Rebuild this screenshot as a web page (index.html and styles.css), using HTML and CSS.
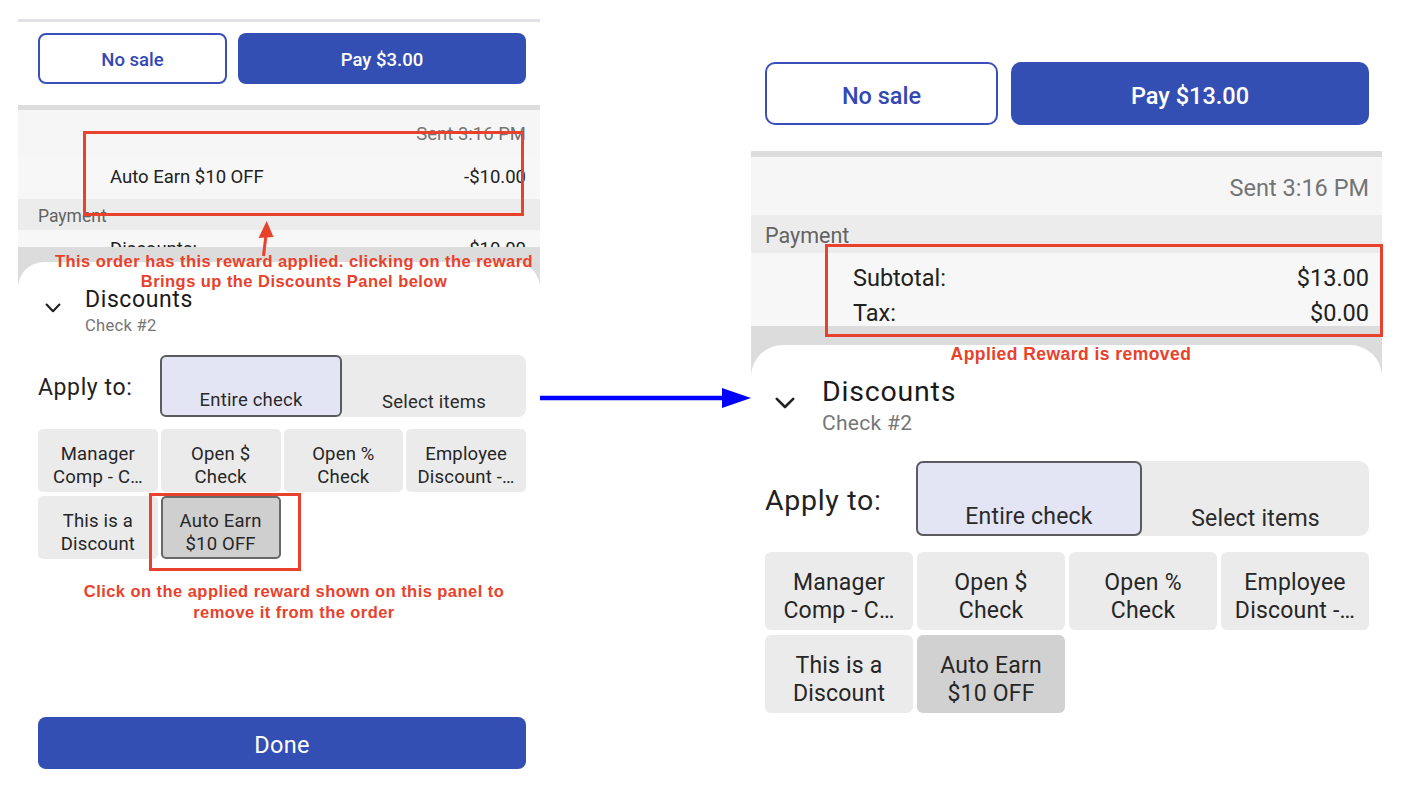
FILE: index.html
```html
<!DOCTYPE html>
<html lang="en">
<head>
<meta charset="utf-8">
<title>Discounts – reward removal</title>
<link rel="stylesheet" href="styles.css">
</head>
<body>
<div class="canvas">

  <section class="phone phone-a">
    <div class="topline"></div>
    <div class="actions">
      <button class="btn btn-outline">No sale</button>
      <button class="btn btn-fill">Pay $3.00</button>
    </div>
    <div class="order">
      <div class="sent">Sent 3:16 PM</div>
      <div class="line-item"><span>Auto Earn $10 OFF</span><span>-$10.00</span></div>
      <div class="pay-head">Payment</div>
      <div class="totals">
        <div class="total-row"><span>Discounts:</span><span>$10.00</span></div>
      </div>
    </div>
    <div class="scrim">
      <div class="sheet">
        <div class="sheet-head">
          <svg class="chev" viewBox="0 0 16 11" aria-hidden="true"><polyline points="1.6,1.6 8,8.2 14.4,1.6"/></svg>
          <div class="titles">
            <div class="title">Discounts</div>
            <div class="sub">Check #2</div>
          </div>
        </div>
        <div class="apply">
          <div class="apply-label">Apply to:</div>
          <div class="seg">
            <div class="seg-item on">Entire check</div>
            <div class="seg-item">Select items</div>
          </div>
        </div>
        <div class="tiles">
          <div class="tile"><span>Manager</span><span>Comp - C…</span></div>
          <div class="tile"><span>Open $</span><span>Check</span></div>
          <div class="tile"><span>Open %</span><span>Check</span></div>
          <div class="tile"><span>Employee</span><span>Discount -…</span></div>
          <div class="tile"><span>This is a</span><span>Discount</span></div>
          <div class="tile tile-sel"><span>Auto Earn</span><span>$10 OFF</span></div>
        </div>
        <button class="btn btn-fill done">Done</button>
      </div>
    </div>
  </section>

  <div class="flow-arrow">
    <svg viewBox="0 0 211 24" aria-hidden="true">
      <line x1="0" y1="12" x2="186" y2="12"/>
      <polygon points="182,2 211,12 182,22"/>
    </svg>
  </div>

  <section class="phone phone-b">
    <div class="actions">
      <button class="btn btn-outline">No sale</button>
      <button class="btn btn-fill">Pay $13.00</button>
    </div>
    <div class="order">
      <div class="sent">Sent 3:16 PM</div>
      <div class="pay-head">Payment</div>
      <div class="totals">
        <div class="total-row"><span>Subtotal:</span><span>$13.00</span></div>
        <div class="total-row"><span>Tax:</span><span>$0.00</span></div>
      </div>
    </div>
    <div class="scrim">
      <div class="sheet">
        <div class="sheet-head">
          <svg class="chev" viewBox="0 0 20 13" aria-hidden="true"><polyline points="1.8,1.8 10,10 18.2,1.8"/></svg>
          <div class="titles">
            <div class="title">Discounts</div>
            <div class="sub">Check #2</div>
          </div>
        </div>
        <div class="apply">
          <div class="apply-label">Apply to:</div>
          <div class="seg">
            <div class="seg-item on">Entire check</div>
            <div class="seg-item">Select items</div>
          </div>
        </div>
        <div class="tiles">
          <div class="tile"><span>Manager</span><span>Comp - C…</span></div>
          <div class="tile"><span>Open $</span><span>Check</span></div>
          <div class="tile"><span>Open %</span><span>Check</span></div>
          <div class="tile"><span>Employee</span><span>Discount -…</span></div>
          <div class="tile"><span>This is a</span><span>Discount</span></div>
          <div class="tile tile-on"><span>Auto Earn</span><span>$10 OFF</span></div>
        </div>
      </div>
    </div>
  </section>

  <!-- annotations drawn over the screenshots -->
  <div class="mark box-a1"></div>
  <svg class="red-arrow" viewBox="0 0 20 36" aria-hidden="true">
    <line x1="7.5" y1="35" x2="10" y2="14"/>
    <polygon points="10.7,0 2.5,17 17.5,16"/>
  </svg>
  <p class="note note-a1">This order has this reward applied. clicking on the reward<br>Brings up the Discounts Panel below</p>
  <div class="mark box-a2"></div>
  <p class="note note-a2">Click on the applied reward shown on this panel to<br>remove it from the order</p>
  <div class="mark box-b1"></div>
  <p class="note note-b1">Applied Reward is removed</p>
</div>
</body>
</html>
```

FILE: styles.css
```css
* { box-sizing: border-box; }

html, body {
  margin: 0;
  padding: 0;
  background: #ffffff;
}

body {
  font-family: Roboto, "Noto Sans", "Liberation Sans", sans-serif;
  color: #212121;
}

.canvas {
  position: relative;
  width: 1402px;
  height: 796px;
  overflow: hidden;
  display: flex;
  align-items: flex-start;
}

.phone {
  display: flex;
  flex-direction: column;
  height: 796px;
  overflow: hidden;
}

.btn {
  font-family: Roboto, "Noto Sans", sans-serif;
  font-weight: 500;
  border-radius: 8px;
  cursor: pointer;
}

.btn-outline {
  background: #ffffff;
  color: #3448b4;
  border: 2px solid #3a4fbb;
}

.btn-fill {
  background: #344fb3;
  color: #ffffff;
  border: none;
}

.actions { display: flex; }

.actions .btn-fill { flex: 1; }

.order {
  background: #f6f6f6;
  border-top-style: solid;
  border-top-color: #dcdcdc;
}

.sent {
  text-align: right;
  color: #747474;
}

.line-item,
.total-row {
  display: flex;
  justify-content: space-between;
}

.pay-head {
  background: #ececec;
  color: #636363;
}

.totals { overflow: hidden; }

.scrim {
  flex: 1;
  background: #dcdcdc;
  display: flex;
  flex-direction: column;
}

.sheet {
  flex: 1;
  background: #ffffff;
  display: flex;
  flex-direction: column;
}

.sheet-head { display: flex; align-items: flex-start; }

.chev { flex: none; }
.chev polyline {
  fill: none;
  stroke: #222222;
  stroke-linecap: round;
  stroke-linejoin: round;
}

.title { font-weight: 400; color: #1a1a1a; }

.sub { color: #767676; }

.apply { display: flex; align-items: center; }

.apply-label { flex: none; color: #222222; }

.seg {
  flex: 1;
  display: flex;
  height: 100%;
  background: #ebebeb;
}

.seg-item {
  flex: 1;
  display: flex;
  align-items: flex-end;
  justify-content: center;
  color: #2a2a2a;
}

.seg-item.on {
  flex: none;
  background: #e3e5f4;
  border: 2px solid #5a5a5f;
}

.tiles { display: grid; grid-template-columns: repeat(4, 1fr); }

.tile {
  background: #ebebeb;
  display: flex;
  flex-direction: column;
  align-items: center;
  justify-content: center;
  text-align: center;
  color: #262626;
  white-space: nowrap;
}

.tile-sel {
  background: #cfcfcf;
  border: 2px solid #686868;
}

.tile-on { background: #d1d1d1; }

/* ---------- left screenshot ---------- */
.phone-a {
  width: 522px;
  margin-left: 18px;
}
.phone-a .topline {
  flex: none;
  height: 3px;
  margin-top: 19px;
  background: #e4e1e6;
}
.phone-a .actions {
  padding: 11px 14px 0 20px;
  gap: 11px;
}
.phone-a .btn { height: 51px; font-size: 18.5px; padding: 3px 0 0; }
.phone-a .btn-outline { width: 189px; }
.phone-a .order {
  margin-top: 21px;
  border-top-width: 5px;
}
.phone-a .sent {
  height: 45px;
  padding: 12px 14px 0 0;
  font-size: 18.5px;
  line-height: 24px;
}
.phone-a .line-item {
  height: 44px;
  padding: 10px 14px 0 92px;
  font-size: 18.5px;
  line-height: 24px;
  background: #f7f7f7;
}
.phone-a .pay-head {
  height: 31px;
  line-height: 30px;
  padding: 2px 0 0 20px;
  font-size: 17.5px;
}
.phone-a .totals {
  height: 17px;
  background: #f7f7f7;
}
.phone-a .total-row {
  padding: 8px 14px 0 92px;
  font-size: 18.5px;
  line-height: 22px;
}
.phone-a .scrim { padding-top: 15px; }
.phone-a .sheet {
  border-radius: 26px 26px 0 0;
  padding: 25px 14px 0 20px;
}
.phone-a .chev {
  width: 16px;
  height: 11px;
  margin: 16px 24px 0 7px;
}
.phone-a .chev polyline { stroke-width: 2.2; }
.phone-a .title {
  font-size: 23px;
  line-height: 26px;
  letter-spacing: 0.6px;
}
.phone-a .sub {
  margin-top: 3px;
  font-size: 16.5px;
  line-height: 20px;
  letter-spacing: 0.3px;
}
.phone-a .apply {
  margin-top: 19px;
  height: 62px;
}
.phone-a .apply-label {
  width: 122px;
  padding-top: 2px;
  font-size: 23px;
  letter-spacing: 0.6px;
}
.phone-a .seg { border-radius: 8px; }
.phone-a .seg-item {
  padding-bottom: 4px;
  font-size: 18.5px;
  line-height: 22px;
  letter-spacing: 0.2px;
}
.phone-a .seg-item.on {
  width: 182px;
  border-radius: 6px;
}
.phone-a .tiles {
  margin-top: 12px;
  grid-auto-rows: 63px;
  gap: 4px 3px;
}
.phone-a .tile {
  padding-top: 10px;
  border-radius: 5px;
  font-size: 18.5px;
  line-height: 23px;
  letter-spacing: 0.2px;
}
.phone-a .done {
  flex: none;
  margin-top: 158px;
  height: 52px;
  padding: 3px 0 0;
  font-size: 23.5px;
  font-weight: 400;
  letter-spacing: 0.3px;
}

/* ---------- arrow between screenshots ---------- */
.flow-arrow {
  flex: none;
  width: 211px;
  height: 24px;
  margin-top: 386px;
}
.flow-arrow svg { display: block; width: 211px; height: 24px; }
.flow-arrow line { stroke: #0000ff; stroke-width: 4.5; }
.flow-arrow polygon { fill: #0000ff; }

/* ---------- right screenshot ---------- */
.phone-b { width: 631px; }
.phone-b .actions {
  padding: 62px 13px 0 14px;
  gap: 13px;
}
.phone-b .btn { height: 63px; border-radius: 10px; font-size: 23.5px; padding: 4px 0 0; }
.phone-b .btn-outline { width: 233px; }
.phone-b .order {
  margin-top: 26px;
  border-top-width: 6px;
}
.phone-b .sent {
  height: 58px;
  padding: 17px 13px 0 0;
  font-size: 23.5px;
  line-height: 28px;
}
.phone-b .pay-head {
  height: 38px;
  line-height: 36px;
  padding: 3px 0 0 14px;
  font-size: 21.5px;
}
.phone-b .totals {
  height: 73px;
  padding-top: 8px;
  background: #f7f7f7;
}
.phone-b .total-row {
  padding: 0 13px 0 102px;
  font-size: 23.5px;
  line-height: 35px;
}
.phone-b .scrim { padding-top: 19px; }
.phone-b .sheet {
  border-radius: 32px 32px 0 0;
  padding: 31px 13px 0 14px;
}
.phone-b .chev {
  width: 20px;
  height: 13px;
  margin: 21px 27px 0 10px;
}
.phone-b .chev polyline { stroke-width: 2.6; }
.phone-b .title {
  font-size: 28.5px;
  line-height: 32px;
  letter-spacing: 0.8px;
}
.phone-b .sub {
  margin-top: 2px;
  font-size: 21px;
  line-height: 26px;
  letter-spacing: 0.3px;
}
.phone-b .apply {
  margin-top: 25px;
  height: 75px;
}
.phone-b .apply-label {
  width: 151px;
  padding-top: 3px;
  font-size: 28.5px;
  letter-spacing: 0.7px;
}
.phone-b .seg { border-radius: 10px; }
.phone-b .seg-item {
  padding-bottom: 4px;
  font-size: 23px;
  line-height: 26px;
  letter-spacing: 0.2px;
}
.phone-b .seg-item.on {
  width: 226px;
  border-radius: 7px;
}
.phone-b .tiles {
  margin-top: 16px;
  grid-auto-rows: 78px;
  gap: 5px 4px;
}
.phone-b .tile {
  padding-top: 12px;
  border-radius: 6px;
  font-size: 23px;
  line-height: 28px;
  letter-spacing: 0.2px;
}

/* ---------- red annotations ---------- */
.mark {
  position: absolute;
  border: 3px solid #e8412c;
}
.box-a1 { left: 83px; top: 131px; width: 441px; height: 85px; }
.box-a2 { left: 149px; top: 493px; width: 152px; height: 78px; }
.box-b1 { left: 825px; top: 244px; width: 558px; height: 93px; }

.red-arrow {
  position: absolute;
  left: 256px;
  top: 221px;
  width: 20px;
  height: 36px;
}
.red-arrow line { stroke: #e8412c; stroke-width: 3; }
.red-arrow polygon { fill: #e8412c; }

.note {
  position: absolute;
  margin: 0;
  font-family: "Liberation Sans", Arial, sans-serif;
  font-weight: 700;
  color: #e8412c;
  text-align: center;
  white-space: nowrap;
  font-size: 16.5px;
  line-height: 20px;
  letter-spacing: 0.45px;
}
.note-a1 { left: 0; width: 588px; top: 251px; }
.note-a2 { left: 0; width: 588px; top: 581px; line-height: 21px; }
.note-b1 { left: 871px; width: 400px; top: 344px; font-size: 17.5px; }
```
